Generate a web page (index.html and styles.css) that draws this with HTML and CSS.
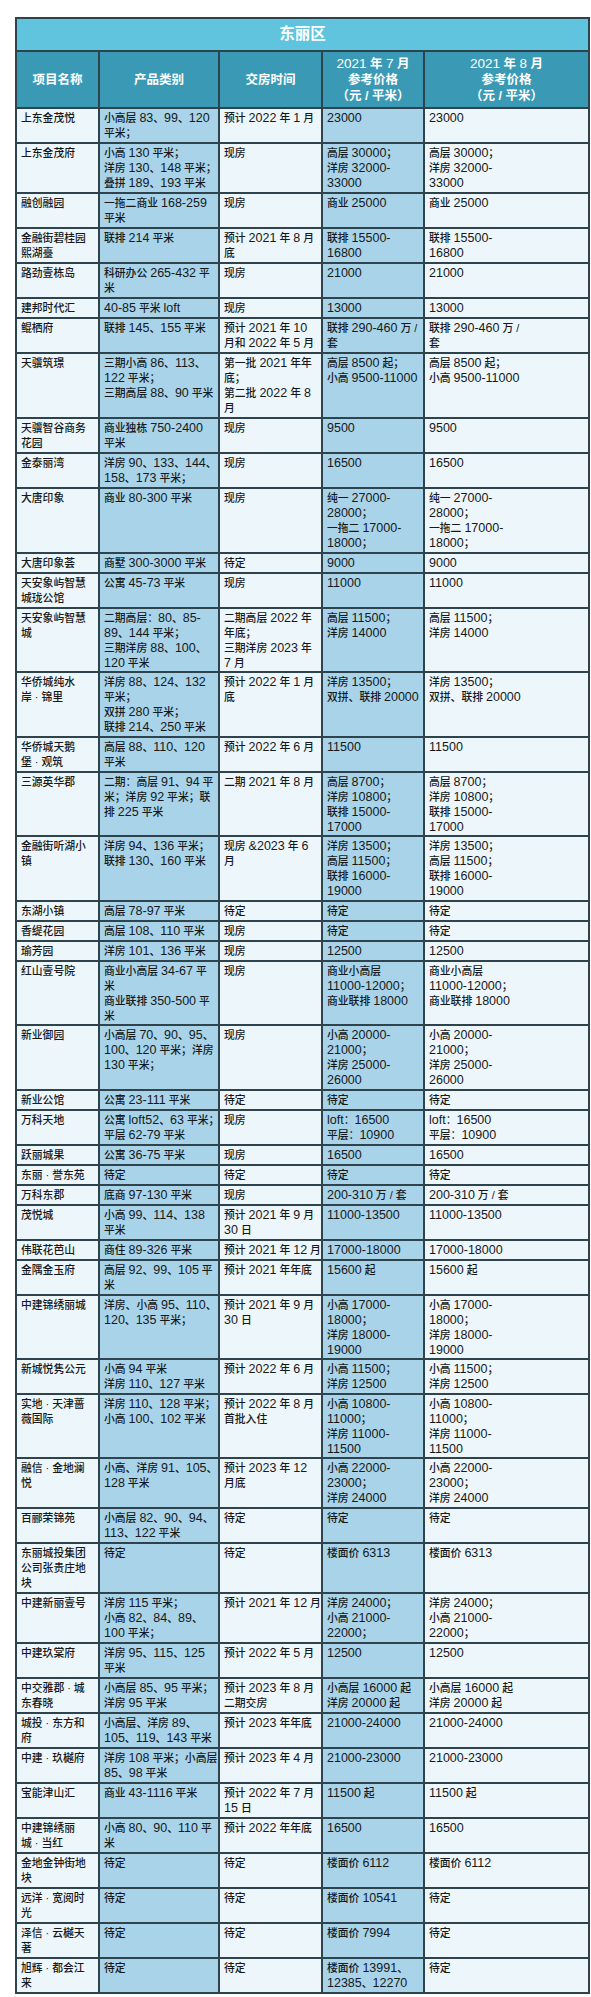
FILE: index.html
```html
<!DOCTYPE html>
<html lang="zh-CN">
<head>
<meta charset="utf-8">
<title>东丽区</title>
<link rel="stylesheet" href="styles.css">
</head>
<body>
<table class="price-table">
<colgroup>
<col class="c-name light">
<col class="c-type blue">
<col class="c-time light">
<col class="c-jul blue">
<col class="c-aug light">
</colgroup>
<thead>
<tr class="title"><th colspan="5">东丽区</th></tr>
<tr class="head">
<th>项目名称</th>
<th>产品类别</th>
<th>交房时间</th>
<th><span class="n">2021</span> 年 <span class="n">7</span> 月<br>参考价格<br>（元 / 平米）</th>
<th><span class="n">2021</span> 年 <span class="n">8</span> 月<br>参考价格<br>（元 / 平米）</th>
</tr>
</thead>
<tbody>
<tr><td>上东金茂悦</td><td>小高层 <span class="n">83</span>、<span class="n">99</span>、<span class="n">120</span><br>平米；</td><td>预计 <span class="n">2022</span> 年 <span class="n">1</span> 月</td><td><span class="n">23000</span></td><td><span class="n">23000</span></td></tr>
<tr><td>上东金茂府</td><td>小高 <span class="n">130</span> 平米；<br>洋房 <span class="n">130</span>、<span class="n">148</span> 平米；<br>叠拼 <span class="n">189</span>、<span class="n">193</span> 平米</td><td>现房</td><td>高层 <span class="n">30000</span>；<br>洋房 <span class="n">32000-</span><br><span class="n">33000</span></td><td>高层 <span class="n">30000</span>；<br>洋房 <span class="n">32000-</span><br><span class="n">33000</span></td></tr>
<tr><td>融创融园</td><td>一拖二商业 <span class="n">168-259</span><br>平米</td><td>现房</td><td>商业 <span class="n">25000</span></td><td>商业 <span class="n">25000</span></td></tr>
<tr><td>金融街碧桂园<br>熙湖臺</td><td>联排 <span class="n">214</span> 平米</td><td>预计 <span class="n">2021</span> 年 <span class="n">8</span> 月<br>底</td><td>联排 <span class="n">15500-</span><br><span class="n">16800</span></td><td>联排 <span class="n">15500-</span><br><span class="n">16800</span></td></tr>
<tr><td>路劲壹栋岛</td><td>科研办公 <span class="n">265-432</span> 平<br>米</td><td>现房</td><td><span class="n">21000</span></td><td><span class="n">21000</span></td></tr>
<tr><td>建邦时代汇</td><td><span class="n">40-85</span> 平米 <span class="n">loft</span></td><td>现房</td><td><span class="n">13000</span></td><td><span class="n">13000</span></td></tr>
<tr><td>鲲栖府</td><td>联排 <span class="n">145</span>、<span class="n">155</span> 平米</td><td>预计 <span class="n">2021</span> 年 <span class="n">10</span><br>月和 <span class="n">2022</span> 年 <span class="n">5</span> 月</td><td>联排 <span class="n">290-460</span> 万 /<br>套</td><td>联排 <span class="n">290-460</span> 万 /<br>套</td></tr>
<tr><td>天骥筑璟</td><td>三期小高 <span class="n">86</span>、<span class="n">113</span>、<br><span class="n">122</span> 平米；<br>三期高层 <span class="n">88</span>、<span class="n">90</span> 平米</td><td>第一批 <span class="n">2021</span> 年年<br>底；<br>第二批 <span class="n">2022</span> 年 <span class="n">8</span><br>月</td><td>高层 <span class="n">8500</span> 起；<br>小高 <span class="n">9500-11000</span></td><td>高层 <span class="n">8500</span> 起；<br>小高 <span class="n">9500-11000</span></td></tr>
<tr><td>天骥智谷商务<br>花园</td><td>商业独栋 <span class="n">750-2400</span><br>平米</td><td>现房</td><td><span class="n">9500</span></td><td><span class="n">9500</span></td></tr>
<tr><td>金泰丽湾</td><td>洋房 <span class="n">90</span>、<span class="n">133</span>、<span class="n">144</span>、<br><span class="n">158</span>、<span class="n">173</span> 平米；</td><td>现房</td><td><span class="n">16500</span></td><td><span class="n">16500</span></td></tr>
<tr><td>大唐印象</td><td>商业 <span class="n">80-300</span> 平米</td><td>现房</td><td>纯一 <span class="n">27000-</span><br><span class="n">28000</span>；<br>一拖二 <span class="n">17000-</span><br><span class="n">18000</span>；</td><td>纯一 <span class="n">27000-</span><br><span class="n">28000</span>；<br>一拖二 <span class="n">17000-</span><br><span class="n">18000</span>；</td></tr>
<tr><td>大唐印象荟</td><td>商墅 <span class="n">300-3000</span> 平米</td><td>待定</td><td><span class="n">9000</span></td><td><span class="n">9000</span></td></tr>
<tr><td>天安象屿智慧<br>城珑公馆</td><td>公寓 <span class="n">45-73</span> 平米</td><td>现房</td><td><span class="n">11000</span></td><td><span class="n">11000</span></td></tr>
<tr class="short"><td>天安象屿智慧<br>城</td><td>二期高层：<span class="n">80</span>、<span class="n">85-</span><br><span class="n">89</span>、<span class="n">144</span> 平米；<br>三期洋房 <span class="n">88</span>、<span class="n">100</span>、<br><span class="n">120</span> 平米</td><td>二期高层 <span class="n">2022</span> 年<br>年底；<br>三期洋房 <span class="n">2023</span> 年<br><span class="n">7</span> 月</td><td>高层 <span class="n">11500</span>；<br>洋房 <span class="n">14000</span></td><td>高层 <span class="n">11500</span>；<br>洋房 <span class="n">14000</span></td></tr>
<tr><td>华侨城纯水<br>岸 · 锦里</td><td>洋房 <span class="n">88</span>、<span class="n">124</span>、<span class="n">132</span><br>平米；<br>双拼 <span class="n">280</span> 平米；<br>联排 <span class="n">214</span>、<span class="n">250</span> 平米</td><td>预计 <span class="n">2022</span> 年 <span class="n">1</span> 月<br>底</td><td>洋房 <span class="n">13500</span>；<br>双拼、联排 <span class="n">20000</span></td><td>洋房 <span class="n">13500</span>；<br>双拼、联排 <span class="n">20000</span></td></tr>
<tr><td>华侨城天鹅<br>堡 · 观筑</td><td>高层 <span class="n">88</span>、<span class="n">110</span>、<span class="n">120</span><br>平米</td><td>预计 <span class="n">2022</span> 年 <span class="n">6</span> 月</td><td><span class="n">11500</span></td><td><span class="n">11500</span></td></tr>
<tr class="short"><td>三源英华郡</td><td>二期：高层 <span class="n">91</span>、<span class="n">94</span> 平<br>米；洋房 <span class="n">92</span> 平米；联<br>排 <span class="n">225</span> 平米</td><td>二期 <span class="n">2021</span> 年 <span class="n">8</span> 月</td><td>高层 <span class="n">8700</span>；<br>洋房 <span class="n">10800</span>；<br>联排 <span class="n">15000-</span><br><span class="n">17000</span></td><td>高层 <span class="n">8700</span>；<br>洋房 <span class="n">10800</span>；<br>联排 <span class="n">15000-</span><br><span class="n">17000</span></td></tr>
<tr><td>金融街听湖小<br>镇</td><td>洋房 <span class="n">94</span>、<span class="n">136</span> 平米；<br>联排 <span class="n">130</span>、<span class="n">160</span> 平米</td><td>现房 <span class="n">&amp;2023</span> 年 <span class="n">6</span><br>月</td><td>洋房 <span class="n">13500</span>；<br>高层 <span class="n">11500</span>；<br>联排 <span class="n">16000-</span><br><span class="n">19000</span></td><td>洋房 <span class="n">13500</span>；<br>高层 <span class="n">11500</span>；<br>联排 <span class="n">16000-</span><br><span class="n">19000</span></td></tr>
<tr><td>东湖小镇</td><td>高层 <span class="n">78-97</span> 平米</td><td>待定</td><td>待定</td><td>待定</td></tr>
<tr><td>香缇花园</td><td>高层 <span class="n">108</span>、<span class="n">110</span> 平米</td><td>现房</td><td>待定</td><td>待定</td></tr>
<tr><td>瑜芳园</td><td>洋房 <span class="n">101</span>、<span class="n">136</span> 平米</td><td>现房</td><td><span class="n">12500</span></td><td><span class="n">12500</span></td></tr>
<tr class="short"><td>红山壹号院</td><td>商业小高层 <span class="n">34-67</span> 平<br>米<br>商业联排 <span class="n">350-500</span> 平<br>米</td><td>现房</td><td>商业小高层<br><span class="n">11000-12000</span>；<br>商业联排 <span class="n">18000</span></td><td>商业小高层<br><span class="n">11000-12000</span>；<br>商业联排 <span class="n">18000</span></td></tr>
<tr><td>新业御园</td><td>小高层 <span class="n">70</span>、<span class="n">90</span>、<span class="n">95</span>、<br><span class="n">100</span>、<span class="n">120</span> 平米；洋房<br><span class="n">130</span> 平米；</td><td>现房</td><td>小高 <span class="n">20000-</span><br><span class="n">21000</span>；<br>洋房 <span class="n">25000-</span><br><span class="n">26000</span></td><td>小高 <span class="n">20000-</span><br><span class="n">21000</span>；<br>洋房 <span class="n">25000-</span><br><span class="n">26000</span></td></tr>
<tr><td>新业公馆</td><td>公寓 <span class="n">23-111</span> 平米</td><td>待定</td><td>待定</td><td>待定</td></tr>
<tr><td>万科天地</td><td>公寓 <span class="n">loft52</span>、<span class="n">63</span> 平米；<br>平层 <span class="n">62-79</span> 平米</td><td>现房</td><td><span class="n">loft</span>：<span class="n">16500</span><br>平层：<span class="n">10900</span></td><td><span class="n">loft</span>：<span class="n">16500</span><br>平层：<span class="n">10900</span></td></tr>
<tr><td>跃丽城果</td><td>公寓 <span class="n">36-75</span> 平米</td><td>现房</td><td><span class="n">16500</span></td><td><span class="n">16500</span></td></tr>
<tr><td>东丽 · 誉东苑</td><td>待定</td><td>待定</td><td>待定</td><td>待定</td></tr>
<tr><td>万科东郡</td><td>底商 <span class="n">97-130</span> 平米</td><td>现房</td><td><span class="n">200-310</span> 万 / 套</td><td><span class="n">200-310</span> 万 / 套</td></tr>
<tr><td>茂悦城</td><td>小高 <span class="n">99</span>、<span class="n">114</span>、<span class="n">138</span><br>平米</td><td>预计 <span class="n">2021</span> 年 <span class="n">9</span> 月<br><span class="n">30</span> 日</td><td><span class="n">11000-13500</span></td><td><span class="n">11000-13500</span></td></tr>
<tr><td>伟联花芭山</td><td>商住 <span class="n">89-326</span> 平米</td><td>预计 <span class="n">2021</span> 年 <span class="n">12</span> 月</td><td><span class="n">17000-18000</span></td><td><span class="n">17000-18000</span></td></tr>
<tr><td>金隅金玉府</td><td>高层 <span class="n">92</span>、<span class="n">99</span>、<span class="n">105</span> 平<br>米</td><td>预计 <span class="n">2021</span> 年年底</td><td><span class="n">15600</span> 起</td><td><span class="n">15600</span> 起</td></tr>
<tr class="short"><td>中建锦绣丽城</td><td>洋房、小高 <span class="n">95</span>、<span class="n">110</span>、<br><span class="n">120</span>、<span class="n">135</span> 平米；</td><td>预计 <span class="n">2021</span> 年 <span class="n">9</span> 月<br><span class="n">30</span> 日</td><td>小高 <span class="n">17000-</span><br><span class="n">18000</span>；<br>洋房 <span class="n">18000-</span><br><span class="n">19000</span></td><td>小高 <span class="n">17000-</span><br><span class="n">18000</span>；<br>洋房 <span class="n">18000-</span><br><span class="n">19000</span></td></tr>
<tr><td>新城悦隽公元</td><td>小高 <span class="n">94</span> 平米<br>洋房 <span class="n">110</span>、<span class="n">127</span> 平米</td><td>预计 <span class="n">2022</span> 年 <span class="n">6</span> 月</td><td>小高 <span class="n">11500</span>；<br>洋房 <span class="n">12500</span></td><td>小高 <span class="n">11500</span>；<br>洋房 <span class="n">12500</span></td></tr>
<tr class="short"><td>实地 · 天津蔷<br>薇国际</td><td>洋房 <span class="n">110</span>、<span class="n">128</span> 平米；<br>小高 <span class="n">100</span>、<span class="n">102</span> 平米</td><td>预计 <span class="n">2022</span> 年 <span class="n">8</span> 月<br>首批入住</td><td>小高 <span class="n">10800-</span><br><span class="n">11000</span>；<br>洋房 <span class="n">11000-</span><br><span class="n">11500</span></td><td>小高 <span class="n">10800-</span><br><span class="n">11000</span>；<br>洋房 <span class="n">11000-</span><br><span class="n">11500</span></td></tr>
<tr><td>融信 · 金地澜<br>悦</td><td>小高、洋房 <span class="n">91</span>、<span class="n">105</span>、<br><span class="n">128</span> 平米</td><td>预计 <span class="n">2023</span> 年 <span class="n">12</span><br>月底</td><td>小高 <span class="n">22000-</span><br><span class="n">23000</span>；<br>洋房 <span class="n">24000</span></td><td>小高 <span class="n">22000-</span><br><span class="n">23000</span>；<br>洋房 <span class="n">24000</span></td></tr>
<tr><td>百郦荣锦苑</td><td>小高层 <span class="n">82</span>、<span class="n">90</span>、<span class="n">94</span>、<br><span class="n">113</span>、<span class="n">122</span> 平米</td><td>待定</td><td>待定</td><td>待定</td></tr>
<tr><td>东丽城投集团<br>公司张贵庄地<br>块</td><td>待定</td><td>待定</td><td>楼面价 <span class="n">6313</span></td><td>楼面价 <span class="n">6313</span></td></tr>
<tr><td>中建新丽壹号</td><td>洋房 <span class="n">115</span> 平米；<br>小高 <span class="n">82</span>、<span class="n">84</span>、<span class="n">89</span>、<br><span class="n">100</span> 平米；</td><td>预计 <span class="n">2021</span> 年 <span class="n">12</span> 月</td><td>洋房 <span class="n">24000</span>；<br>小高 <span class="n">21000-</span><br><span class="n">22000</span>；</td><td>洋房 <span class="n">24000</span>；<br>小高 <span class="n">21000-</span><br><span class="n">22000</span>；</td></tr>
<tr><td>中建玖棠府</td><td>洋房 <span class="n">95</span>、<span class="n">115</span>、<span class="n">125</span><br>平米</td><td>预计 <span class="n">2022</span> 年 <span class="n">5</span> 月</td><td><span class="n">12500</span></td><td><span class="n">12500</span></td></tr>
<tr><td>中交雅郡 · 城<br>东春晓</td><td>小高层 <span class="n">85</span>、<span class="n">95</span> 平米；<br>洋房 <span class="n">95</span> 平米</td><td>预计 <span class="n">2023</span> 年 <span class="n">8</span> 月<br>二期交房</td><td>小高层 <span class="n">16000</span> 起<br>洋房 <span class="n">20000</span> 起</td><td>小高层 <span class="n">16000</span> 起<br>洋房 <span class="n">20000</span> 起</td></tr>
<tr><td>城投 · 东方和<br>府</td><td>小高层、洋房 <span class="n">89</span>、<br><span class="n">105</span>、<span class="n">119</span>、<span class="n">143</span> 平米</td><td>预计 <span class="n">2023</span> 年年底</td><td><span class="n">21000-24000</span></td><td><span class="n">21000-24000</span></td></tr>
<tr><td>中建 · 玖樾府</td><td>洋房 <span class="n">108</span> 平米；小高层<br><span class="n">85</span>、<span class="n">98</span> 平米</td><td>预计 <span class="n">2023</span> 年 <span class="n">4</span> 月</td><td><span class="n">21000-23000</span></td><td><span class="n">21000-23000</span></td></tr>
<tr><td>宝能津山汇</td><td>商业 <span class="n">43-1116</span> 平米</td><td>预计 <span class="n">2022</span> 年 <span class="n">7</span> 月<br><span class="n">15</span> 日</td><td><span class="n">11500</span> 起</td><td><span class="n">11500</span> 起</td></tr>
<tr><td>中建锦绣丽<br>城 · 当红</td><td>小高 <span class="n">80</span>、<span class="n">90</span>、<span class="n">110</span> 平<br>米</td><td>预计 <span class="n">2022</span> 年年底</td><td><span class="n">16500</span></td><td><span class="n">16500</span></td></tr>
<tr><td>金地金钟街地<br>块</td><td>待定</td><td>待定</td><td>楼面价 <span class="n">6112</span></td><td>楼面价 <span class="n">6112</span></td></tr>
<tr><td>远洋 · 宽阅时<br>光</td><td>待定</td><td>待定</td><td>楼面价 <span class="n">10541</span></td><td>待定</td></tr>
<tr><td>泽信 · 云樾天<br>著</td><td>待定</td><td>待定</td><td>楼面价 <span class="n">7994</span></td><td>待定</td></tr>
<tr><td>旭辉 · 都会江<br>来</td><td>待定</td><td>待定</td><td>楼面价 <span class="n">13991</span>、<br><span class="n">12385</span>、<span class="n">12270</span></td><td>待定</td></tr>
</tbody>
</table>
</body>
</html>
```

FILE: styles.css
```css
html, body {
  margin: 0;
  padding: 0;
  background: #ffffff;
}

body {
  font-family: "Liberation Sans", "Noto Sans CJK SC", sans-serif;
  color: #15191c;
}

.price-table {
  margin: 17px 0 0 15px;
  width: 573px;
  border-collapse: collapse;
  table-layout: fixed;
}

.c-name { width: 83px; }
.c-type { width: 120px; }
.c-time { width: 103px; }
.c-jul  { width: 102px; }
.c-aug  { width: 165px; }

.light { background: #edf6fa; }
.blue  { background: #a8d3e8; }

.price-table th,
.price-table td {
  border: 2px solid #2f434c;
}

.title th {
  background: #60c4de;
  color: #ffffff;
  font-size: 15.5px;
  font-weight: bold;
  line-height: 20px;
  padding: 5px 0 6px;
  text-align: center;
}

.head th {
  background: #3a9ab5;
  color: #ffffff;
  font-size: 12.5px;
  font-weight: bold;
  line-height: 16px;
  padding: 4px 2px 3px;
  text-align: center;
  vertical-align: middle;
}

.head .n {
  font-size: 13.5px;
  line-height: 12px;
}

.price-table td {
  font-size: 10.8px;
  font-weight: 500;
  line-height: 15px;
  padding: 2px 3px 1px 4px;
  text-align: left;
  vertical-align: top;
  white-space: nowrap;
}

.price-table .short td {
  padding-bottom: 0;
}

.n {
  font-size: 12.5px;
  font-weight: normal;
  line-height: 12px;
}
```
